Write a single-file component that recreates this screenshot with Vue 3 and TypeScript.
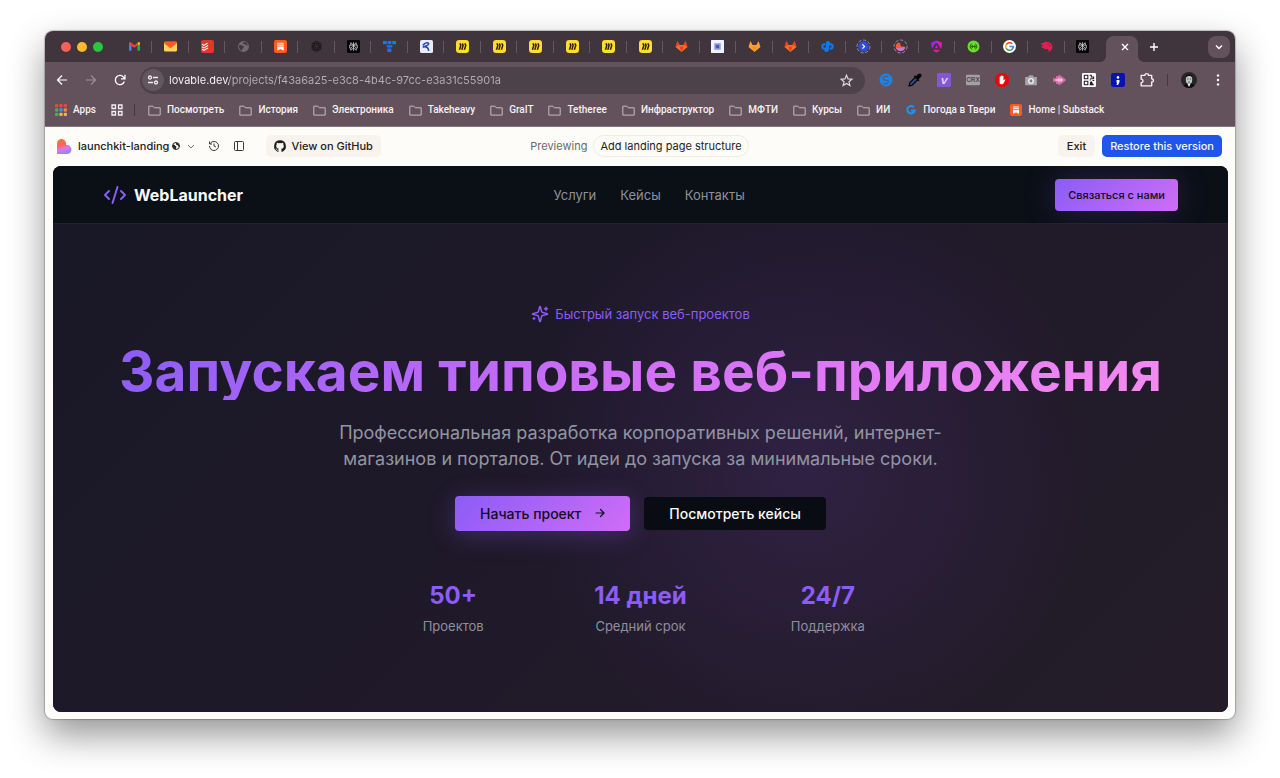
<script setup lang="ts">
import { ref } from 'vue'

const miro =
  '<rect width="24" height="24" rx="6" fill="#ffdd33"/><path d="M6 7l2.600-1.500 1.800 4-2.400 8.500H5l2.400-8zM10.400 7L13 5.500l1.600 4-2.200 8.500h-3l2.200-8zM15 7l2.600-1.500L19.500 9.500 17 18h-3l2.600-8z" fill="#2a2309"/>'
const perplexity =
  '<rect width="24" height="24" rx="2" fill="#050505"/><path d="M12 4v16M12 9.500L7 5v4.500M12 9.500L17 5v4.500M12 10l-5 5v4l5-4.500M12 10l5 5v4l-5-4.500M7 15H5V9.500h14V15h-2" fill="none" stroke="#e5e5e5" stroke-width="1.300"/>'
const fox =
  '<path d="M1 13L4.500 2l4 7h7l4-7L23 13l-11 9z" fill="#fc6d26"/><path d="M12 22L8 12h8z" fill="#e24329"/><path d="M1 13L4.500 2l4 7zM23 13L19.500 2l-4 7z" fill="#e24329"/>'
const foxYellow =
  '<path d="M1 13L4.500 2l4 7h7l4-7L23 13l-11 9z" fill="#fca326"/><path d="M12 22L8 12h8z" fill="#fc8a26"/>'
const substack =
  '<rect width="24" height="24" rx="4" fill="#ff5a1f"/><path d="M6 5h12v2H6zM6 8.500h12v2H6zM6 12h12v8l-6-3.500L6 20z" fill="#fff"/>'

const icons: Record<string, string> = {
  gmail:
    '<path d="M2 20V6l4.500 3v11z" fill="#4285f4"/><path d="M22 20V6l-4.500 3v11z" fill="#34a853"/><path d="M17.500 9.500V5l1.500-1c2-.8 3 .5 3 2v2.500z" fill="#fbbc04"/><path d="M2 8.500V6c0-1.800 1.600-2.800 3-1.800L12 9.500l5.500-4.500v5L12 14.500z" fill="#ea4335"/>',
  mail:
    '<path d="M0 5a2 2 0 012-2h20a2 2 0 012 2v14a2 2 0 01-2 2H2a2 2 0 01-2-2z" fill="#ffd35a"/><path d="M0 6c0-2 1-3 2-3h20c1 0 2 1 2 3L12 15z" fill="#ff5a1f"/>',
  todoist:
    '<rect width="24" height="24" rx="4" fill="#e0392b"/><path d="M2 8l3.500 2L12 6M2 12.500l3.500 2L13 10M2 17l3.500 2L13 14.500" fill="none" stroke="#fff" stroke-width="2"/>',
  globe:
    '<circle cx="12" cy="12" r="10" fill="#75696f"/><path d="M4 9c3-1 4 2 7 2s2 3 0 4-1 3-2 5c-4-2-6-7-5-11zM12 4c4-1 7 2 8 6-3 1-4-2-6-2s-3-2-2-4z" fill="#40353c"/>',
  substack,
  openai:
    '<g fill="none" stroke="#17110f" stroke-width="1.400"><ellipse cx="12" cy="12" rx="5" ry="9.500"/><ellipse cx="12" cy="12" rx="5" ry="9.500" transform="rotate(60 12 12)"/><ellipse cx="12" cy="12" rx="5" ry="9.500" transform="rotate(120 12 12)"/><circle cx="12" cy="12" r="2.500"/></g>',
  perplexity,
  blueT:
    '<path d="M0 2h7v6H0zM8.500 2h7v6h-7zM17 2h7v6h-7zM7 9.500h10V14H7zM8 15.500h7.500V22H8z" fill="#1677ef"/>',
  route:
    '<rect width="24" height="24" rx="3" fill="#e8edfb"/><path d="M6 9c5-5 10-5 10-2s-8 5-10 6c5-1 9 0 10 6" fill="none" stroke="#2745b8" stroke-width="2.800" stroke-linecap="round" stroke-linejoin="round"/>',
  miro,
  fox,
  foxYellow,
  doc: '<rect width="24" height="24" rx="1" fill="#f1f2ff"/><rect x="6" y="6" width="12" height="12" fill="#8f99dd"/><path d="M9 9h6v6H9z" fill="#4958bd"/>',
  blueNode:
    '<path d="M12 2c4 0 5 2 5 4h2c6 1 6 11 0 12h-3v-4h2c2 0 2-4 0-4h-3v5c0 4-2 7-5 7-3 0-4-2-4-4H5c-6-1-6-11 0-12h3v4H6c-2 0-2 4 0 4h3V8c0-4 1-6 3-6z" fill="#0f78e8"/>',
  ringArrow:
    '<circle cx="12" cy="12" r="12" fill="none" stroke="#aaa5c8" stroke-width="1.400" stroke-dasharray="6 3"/><circle cx="12" cy="12" r="9.500" fill="#2f4be0"/><path d="M10 8l4 4-4 4" fill="none" stroke="#fff" stroke-width="2.200"/>',
  ringHeart:
    '<circle cx="12" cy="12" r="12" fill="none" stroke="#aaa5c8" stroke-width="1.400" stroke-dasharray="6 3"/><path d="M3 12a9 9 0 014-7c3-1 5 1 5 4l1 3h5c3 0 3 2 2 4-3 6-17 6-17-4z" fill="#ff5630"/><path d="M4 14c4 2 12 1 16-1 0 9-14 10-16 1z" fill="#c478e8"/>',
  angular:
    '<path d="M12 1l10 4-1.500 11L14 6h-4L3.500 16 2 5z" fill="#a327e0"/><path d="M12 1l10 4-1.500 11L14 6z" fill="#e01ba0"/><path d="M7 18h10l1 2-6 3-6-3z" fill="#e01ba0"/><path d="M12 9l3 6H9z" fill="#c81fc0"/>',
  green:
    '<circle cx="12" cy="12" r="11" fill="#6ddc2d"/><path d="M9 7a5.500 5.500 0 000 10M15 7a5.500 5.500 0 010 10M8 12h8M9.500 9v6M14.500 9v6" fill="none" stroke="#1d5f10" stroke-width="1.800"/>',
  google:
    '<circle cx="12" cy="12" r="12" fill="#fff"/><g fill="none" stroke-width="3"><path d="M6 8.500A7 7 0 0117 7" stroke="#ea4335"/><path d="M6 15.500a7 7 0 010-7" stroke="#fbbc04"/><path d="M17 17a7 7 0 01-11-1.500" stroke="#34a853"/><path d="M12 12h7a7 7 0 01-2 5" stroke="#4285f4"/></g>',
  nest: '<path d="M2 5c4 2 5-2 9-2 7 0 12 4 12 10 0 4-3 8-8 9 2-3 1-5-1-6-3 2-6 1-7-1-3 0-5-2-5-4 2 1 4 0 4-1-2 0-4-2-4-5z" fill="#de2150"/><path d="M13 7c4 0 6 3 6 6" fill="none" stroke="#8d1b3c" stroke-width="1.500"/>',
  shazam:
    '<circle cx="12" cy="12" r="11" fill="#1a84ea"/><path d="M16 6c-5-2-9 1-9 4 0 4 9 1 9 5 0 3-4 5-9 3" fill="none" stroke="#5a5a72" stroke-width="2.200"/>',
  dropper:
    '<path d="M2 22l1-5L13 7l4 4L7 21z" fill="#2a4e92" stroke="#050505" stroke-width="2.200"/><path d="M11 5l8 8M15 7l3-4c3-2 5 1 3 3l-4 4z" stroke="#050505" stroke-width="3" fill="#050505"/>',
  letterV:
    '<rect width="24" height="24" rx="2" fill="#8457d5"/><text x="12" y="18" text-anchor="middle" font-family="Liberation Sans, sans-serif" font-size="17" font-weight="700" font-style="italic" fill="#e9defc">V</text>',
  crx: '<rect x="0" y="3" width="24" height="18" rx="2" fill="#a5a0a2"/><text x="12" y="16" text-anchor="middle" font-family="Liberation Sans, sans-serif" font-size="11" font-weight="700" fill="#514a4e">CRX</text>',
  block:
    '<path d="M7 0h10l7 7v10l-7 7H7l-7-7V7z" fill="#e00d0d"/><path d="M8 12V7c0-1 1.500-1 1.500 0V5.500c0-1 1.500-1 1.500 0V5c0-1 2-1 2 0v1c0-1 1.500-1 1.500 0v7l2-2c1-.6 1.500.4 1 1l-3 6c-1 2-6 2-6.500-1z" fill="#fff"/>',
  camera:
    '<path d="M2 7h5l2-3h6l2 3h5v14H2z" fill="#a8a5a6"/><circle cx="12" cy="13.500" r="5" fill="#f2f2f2"/><circle cx="12" cy="13.500" r="2.600" fill="#70808a"/>',
  record:
    '<path d="M0 9h5V5h5V2l13 10-13 10v-3H5v-4H0z" fill="#d66aa8"/><path d="M4 12h13M10 8v8M14 9v6" stroke="#ffc3e4" stroke-width="2.400"/>',
  qr: '<rect width="24" height="24" rx="2" fill="#fff"/><g fill="none" stroke="#231d20" stroke-width="1.800"><path d="M4 4h6v6H4zM4 14h6v6H4z"/><path d="M13 4h3v3h4v3h-6M13 12h2M18 13h3"/></g><path d="M14 15l3-1 1 3 3 4h-8z" fill="#231d20"/>',
  semi: '<rect width="24" height="24" rx="4" fill="#0712b0"/><circle cx="12" cy="7.500" r="2.200" fill="#fff"/><path d="M9.500 12h5v4l-2.500 4.500H9.500l1-4h-1z" fill="#fff"/>',
  puzzle:
    '<path d="M2 4h6.500c-.5-4 6.500-4 6 0H20v6c4-.5 4 6 0 5.500V22H2v-5.500c4 .3 4-6.300 0-6z" fill="none" stroke="#f4eef1" stroke-width="2.400" stroke-linejoin="round"/>',
  folder:
    '<path d="M1.500 4h7.500l2.500 3H22.500v13.500h-21z" fill="none" stroke="#c9bcc4" stroke-width="1.800" stroke-linejoin="round"/>',
  weather:
    '<path d="M18 6.500a7.500 7.500 0 10 1.500 6.500H12" fill="none" stroke="#2592e8" stroke-width="4"/>',
}

const tabs = [
  ['gmail', 'Gmail'], ['mail', 'Mail'], ['todoist', 'Todoist'], ['globe', 'Site'], ['substack', 'Substack'],
  ['openai', 'ChatGPT'], ['perplexity', 'Perplexity'], ['blueT', 'Tracker'], ['route', 'Route'],
  ['miro', 'Miro'], ['miro', 'Miro'], ['miro', 'Miro'], ['miro', 'Miro'], ['miro', 'Miro'], ['miro', 'Miro'],
  ['fox', 'GitLab'], ['doc', 'Document'], ['foxYellow', 'GitLab'], ['fox', 'GitLab'], ['blueNode', 'Nodes'],
  ['ringArrow', 'Console'], ['ringHeart', 'Lovable'], ['angular', 'Angular'], ['green', 'Swagger'],
  ['google', 'Google'], ['nest', 'NestJS'], ['perplexity', 'Perplexity'],
]
const extensions = [
  ['shazam', 'Shazam'], ['dropper', 'Color picker'], ['letterV', 'Video'], ['crx', 'CRX'], ['block', 'Blocker'],
  ['camera', 'Screenshot'], ['record', 'Recorder'], ['qr', 'QR code'], ['semi', 'Snippets'], ['puzzle', 'Extensions'],
]
const bookmarks = [
  ['folder', 'Посмотреть'], ['folder', 'История'], ['folder', 'Электроника'], ['folder', 'Takeheavy'],
  ['folder', 'GraIT'], ['folder', 'Tetheree'], ['folder', 'Инфраструктор'], ['folder', 'МФТИ'],
  ['folder', 'Курсы'], ['folder', 'ИИ'], ['weather', 'Погода в Твери'], ['substack', 'Home | Substack'],
]
const appColors = ['#e5493a', '#e5493a', '#e5493a', '#45b05a', '#4b8bf0', '#e98a3a', '#45b05a', '#f0b83a', '#f0b83a']
const stats = [
  { value: '50+', label: 'Проектов' },
  { value: '14 дней', label: 'Средний срок' },
  { value: '24/7', label: 'Поддержка' },
]
const url = ref('lovable.dev/projects/f43a6a25-e3c8-4b4c-97cc-e3a31c55901a')
</script>

<template>
  <div class="desktop">
    <div class="window">
      <div class="tabstrip">
        <div class="lights"><i class="red"></i><i class="yellow"></i><i class="green"></i></div>
        <div class="tabs">
          <button v-for="(t, i) in tabs" :key="i" class="tab" :aria-label="t[1]">
            <svg viewBox="0 0 24 24" v-html="icons[t[0]]"></svg>
          </button>
        </div>
        <div class="tab-active">
          <button class="bare" aria-label="Close tab">
            <svg width="8" height="8" viewBox="0 0 8 8"><path d="M1 1l6 6M7 1L1 7" stroke="#fff" stroke-width="1.400" /></svg>
          </button>
        </div>
        <button class="bare newtab" aria-label="New tab">
          <svg width="10" height="10" viewBox="0 0 10 10"><path d="M5 1v8M1 5h8" stroke="#fff" stroke-width="1.400" /></svg>
        </button>
        <button class="tabsearch" aria-label="Search tabs">
          <svg width="8" height="6" viewBox="0 0 8 6"><path d="M1 1.500l3 3 3-3" fill="none" stroke="#fff" stroke-width="1.400" /></svg>
        </button>
      </div>

      <div class="toolbar">
        <div class="nav-buttons">
          <button class="bare" aria-label="Back">
            <svg width="12" height="12" viewBox="0 0 12 12" fill="none" stroke="#fff" stroke-width="1.200"><path d="M11 6H1.500M6 1.500L1.500 6 6 10.500" /></svg>
          </button>
          <button class="bare" aria-label="Forward">
            <svg width="12" height="12" viewBox="0 0 12 12" fill="none" stroke="#9c8e96" stroke-width="1.200"><path d="M1 6h9.500M6 1.500L10.500 6 6 10.500" /></svg>
          </button>
          <button class="bare" aria-label="Reload">
            <svg width="12" height="12" viewBox="0 0 12 12" fill="none" stroke="#fff" stroke-width="1.300"><path d="M10.300 7.500A4.600 4.600 0 1 1 9.800 3.500L11 4.800M11 .8v4H7" /></svg>
          </button>
        </div>
        <div class="address">
          <button class="siteinfo" aria-label="Site information">
            <svg width="12" height="12" viewBox="0 0 12 12" fill="none" stroke="#f2ebef" stroke-width="1.300"><circle cx="3" cy="3.500" r="1.500" /><path d="M6 3.500h5M1 8.500h5" /><circle cx="9" cy="8.500" r="1.500" /></svg>
          </button>
          <input v-model="url" class="url" type="text" aria-label="Address" />
          <button class="bare" aria-label="Bookmark this page">
            <svg width="13" height="13" viewBox="0 0 24 24" fill="none" stroke="#e2d9de" stroke-width="2.200"><path d="M12 2.500l2.900 6.600 7.100.6-5.400 4.700 1.700 7L12 17.600l-6.300 3.800 1.700-7L2 9.700l7.100-.6z" /></svg>
          </button>
        </div>
        <div class="extensions">
          <button v-for="e in extensions" :key="e[0]" class="bare" :aria-label="e[1]">
            <svg width="14" height="14" viewBox="0 0 24 24" v-html="icons[e[0]]"></svg>
          </button>
        </div>
        <span class="vline"></span>
        <button class="bare" aria-label="Profile">
          <svg width="16" height="16" viewBox="0 0 16 16"><circle cx="8" cy="8" r="8" fill="#262626" /><path d="M3 14c1-3 3-3 5-3s4 0 5 3a8 8 0 01-10 0z" fill="#0c0c0c" /><ellipse cx="8" cy="7.500" rx="3.200" ry="4.600" fill="#c6c6c6" /><path d="M4.800 5.500C4.500 1 11.500 1 11.200 5.500 10 3.500 7 3.500 4.800 5.500z" fill="#0e0e0e" /><path d="M6 7h1.500M8.700 7h1.500M7 10h2" stroke="#444" stroke-width=".8" /><path d="M6.500 12l1.500 3 1.500-3z" fill="#eee" /></svg>
        </button>
        <button class="bare dots" aria-label="Menu">
          <svg width="4" height="14" viewBox="0 0 4 14" fill="#fff"><circle cx="2" cy="2.500" r="1.200" /><circle cx="2" cy="7" r="1.200" /><circle cx="2" cy="11.500" r="1.200" /></svg>
        </button>
      </div>

      <nav class="bookmarks" aria-label="Bookmarks">
        <a href="#" class="bookmark apps">
          <svg width="11" height="11" viewBox="0 0 11 11"><rect v-for="(c, i) in appColors" :key="i" :x="(i % 3) * 4" :y="Math.floor(i / 3) * 4" width="3" height="3" rx="1" :fill="c" /></svg>
          Apps
        </a>
        <button class="bare" aria-label="Tab groups">
          <svg width="12" height="12" viewBox="0 0 12 12" fill="none" stroke="#f4eef1" stroke-width="1.300"><path d="M1 1h3.500v3.500H1zM7.500 1H11v3.500H7.500zM1 7.500h3.500V11H1zM7.500 7.500H11V11H7.500z" /></svg>
        </button>
        <span class="vline"></span>
        <a v-for="b in bookmarks" :key="b[1]" href="#" class="bookmark" :class="b[0]">
          <svg viewBox="0 0 24 24" v-html="icons[b[0]]"></svg>{{ b[1] }}
        </a>
      </nav>

      <div class="appbar">
        <div class="project">
          <button class="bare projname">
            <svg width="14" height="15" viewBox="0 0 14 15"><defs><linearGradient id="heart" x1="0" y1="0" x2=".3" y2="1"><stop offset="0" stop-color="#ff7a1a" /><stop offset=".45" stop-color="#fb6468" /><stop offset=".75" stop-color="#d67ae8" /><stop offset="1" stop-color="#8f86ff" /></linearGradient></defs><path d="M0 4.500a4.500 4.500 0 019 0V6h1a4.500 4.500 0 010 9H0z" fill="url(#heart)" /></svg>
            <span>launchkit-landing</span>
            <svg width="8" height="8" viewBox="0 0 8 8"><circle cx="4" cy="4" r="3.500" fill="#fff" stroke="#222" /><path d="M1 2.500c2 0 2 1.500 3 1.800S4 6 3.500 7.500C1.500 7 .5 5 1 2.500zM4.500.7C6.500 1 7.500 3 7.300 5 6 4.500 6 3 5 3s-1.500-1-.5-2.300z" fill="#222" /></svg>
            <svg width="8" height="5" viewBox="0 0 8 5"><path d="M1 1l3 3 3-3" fill="none" stroke="#777" /></svg>
          </button>
          <button class="bare" aria-label="History">
            <svg width="12" height="12" viewBox="0 0 24 24" fill="none" stroke="#3a3a38" stroke-width="2"><path d="M3 12a9 9 0 1 0 9-9 9.750 9.750 0 0 0-6.740 2.740L3 8M3 3v5h5M12 7v5l4 2" /></svg>
          </button>
          <button class="bare panel" aria-label="Toggle panel">
            <svg width="10" height="10" viewBox="0 0 10 10" fill="none" stroke="#3a3a38"><rect x=".5" y=".5" width="9" height="9" rx="1" /><path d="M3.500.5v9" /></svg>
          </button>
          <button class="chip github">
            <svg width="12" height="12" viewBox="0 0 24 24" fill="#1b1b1b"><path d="M12 .5a12 12 0 00-3.800 23.300c.6.1.8-.2.8-.6v-2.200c-3.300.7-4-1.400-4-1.400-.6-1.400-1.400-1.800-1.400-1.800-1-.7.100-.7.100-.7 1.200.1 1.900 1.200 1.900 1.200 1 1.800 2.800 1.300 3.500 1 .1-.8.400-1.300.700-1.600-2.600-.3-5.400-1.300-5.400-6 0-1.200.5-2.300 1.300-3.100-.2-.4-.6-1.600 0-3.200 0 0 1-.3 3.400 1.200a11.500 11.500 0 016 0C17.300 5.100 18.300 5.400 18.300 5.400c.7 1.700.2 2.900.1 3.200.8.800 1.200 1.900 1.200 3.200 0 4.600-2.800 5.600-5.400 5.900.4.400.8 1.100.8 2.200v3.300c0 .3.200.7.800.6A12 12 0 0012 .5z" /></svg>
            View on GitHub
          </button>
        </div>
        <div class="previewing">Previewing <span class="pill">Add landing page structure</span></div>
        <div class="actions">
          <button class="chip">Exit</button>
          <button class="restore">Restore this version</button>
        </div>
      </div>

      <main class="site">
        <header class="site-head">
          <a href="#" class="brand">
            <svg width="24" height="24" viewBox="0 0 24 24" fill="none" stroke="#8b5cf6" stroke-width="2" stroke-linecap="round" stroke-linejoin="round"><path d="M18 16l4-4-4-4M6 8l-4 4 4 4M14.500 4l-5 16" /></svg>
            WebLauncher
          </a>
          <nav class="site-nav">
            <a href="#">Услуги</a><a href="#">Кейсы</a><a href="#">Контакты</a>
          </nav>
          <button class="contact">Связаться с нами</button>
        </header>
        <section class="hero">
          <div class="badge">
            <svg width="18" height="18" viewBox="0 0 24 24" fill="none" stroke="#8b5cf6" stroke-width="2" stroke-linecap="round" stroke-linejoin="round"><path d="M9.937 15.500A2 2 0 0 0 8.500 14.063l-6.135-1.582a.5.5 0 0 1 0-.962L8.500 9.936A2 2 0 0 0 9.937 8.500l1.582-6.135a.5.5 0 0 1 .963 0L14.063 8.500A2 2 0 0 0 15.500 9.937l6.135 1.581a.5.5 0 0 1 0 .964L15.500 14.063a2 2 0 0 0-1.437 1.437l-1.582 6.135a.5.5 0 0 1-.963 0zM20 3v4M22 5h-4M4 17v2M5 18H3" /></svg>
            Быстрый запуск веб-проектов
          </div>
          <h1>Запускаем типовые веб-приложения</h1>
          <p>Профессиональная разработка корпоративных решений, интернет-магазинов и порталов. От идеи до запуска за минимальные сроки.</p>
          <div class="cta">
            <button class="primary">
              Начать проект
              <svg width="10" height="10" viewBox="0 0 10 10" fill="none" stroke="currentColor" stroke-width="1.200" stroke-linecap="round" stroke-linejoin="round"><path d="M1 5h8M5.500 1.500L9 5 5.500 8.500" /></svg>
            </button>
            <button class="secondary">Посмотреть кейсы</button>
          </div>
          <dl class="stats">
            <div v-for="s in stats" :key="s.label">
              <dd>{{ s.value }}</dd>
              <dt>{{ s.label }}</dt>
            </div>
          </dl>
        </section>
      </main>
    </div>
  </div>
</template>

<style>
body {
  margin: 0;
  background: #fff;
}
</style>

<style scoped>
* {
  box-sizing: border-box;
}
.desktop {
  display: flex;
  min-height: 100vh;
  padding: 31px 45px 59px;
  font-family: Inter, "Noto Sans", sans-serif;
  overflow: hidden;
}
button {
  font: inherit;
  color: inherit;
  border: 0;
  padding: 0;
  cursor: pointer;
}
a {
  color: inherit;
  text-decoration: none;
}
svg {
  display: block;
  flex: none;
  overflow: visible;
}
.bare {
  background: none;
}
.window {
  flex: 1;
  min-width: 0;
  display: flex;
  flex-direction: column;
  border-radius: 8px;
  background: #fdfcf8;
  box-shadow: 0 0 1px 1px rgba(0, 0, 0, 0.22), 0 16px 36px rgba(0, 0, 0, 0.42);
}
.tabstrip {
  display: flex;
  align-items: center;
  height: 31px;
  background: #40353c;
  border-radius: 8px 8px 0 0;
  padding-right: 5px;
}
.lights {
  display: flex;
  gap: 6px;
  padding-left: 16px;
  width: 71px;
  flex: none;
}
.lights i {
  width: 10px;
  height: 10px;
  border-radius: 50%;
}
.red {
  background: #f96057;
}
.yellow {
  background: #fcbb2f;
}
.green {
  background: #29c53f;
}
.tabs {
  flex: 1;
  display: flex;
  min-width: 0;
}
.tab {
  flex: 1;
  display: flex;
  justify-content: center;
  align-items: center;
  height: 14px;
  min-width: 0;
  background: linear-gradient(#65585f, #65585f) right center / 1px 12px no-repeat;
}
.tab:last-child {
  background: none;
}
.tab svg {
  width: 13px;
  height: 13px;
}
.tab-active {
  position: relative;
  align-self: flex-end;
  display: flex;
  align-items: center;
  justify-content: flex-end;
  width: 32px;
  height: 26px;
  margin-left: 5px;
  padding: 0 9px 4px 0;
  background: #63525c;
  border-radius: 8px 8px 0 0;
}
.tab-active::before,
.tab-active::after {
  content: "";
  position: absolute;
  bottom: 0;
  width: 6px;
  height: 6px;
}
.tab-active::before {
  right: 100%;
  background: radial-gradient(circle at 0 0, transparent 6px, #63525c 6px);
}
.tab-active::after {
  left: 100%;
  background: radial-gradient(circle at 100% 0, transparent 6px, #63525c 6px);
}
.newtab {
  width: 32px;
  display: flex;
  justify-content: center;
}
.tabsearch {
  display: flex;
  align-items: center;
  justify-content: center;
  width: 22px;
  height: 22px;
  margin-left: 38px;
  border-radius: 8px;
  background: #63525c;
}
.toolbar {
  display: flex;
  align-items: center;
  height: 36px;
  padding: 0 15px 0 11px;
  background: #63525c;
}
.nav-buttons {
  display: flex;
  gap: 17px;
  margin-right: 14px;
}
.address {
  flex: 1;
  display: flex;
  align-items: center;
  min-width: 0;
  height: 27px;
  padding: 0 12px 0 2px;
  border-radius: 14px;
  background: #4d424a;
}
.siteinfo {
  display: flex;
  align-items: center;
  justify-content: center;
  width: 22px;
  height: 22px;
  border-radius: 50%;
  background: #63565e;
}
.url {
  flex: 1;
  min-width: 0;
  margin-left: 5px;
  padding: 0;
  border: 0;
  outline: 0;
  font: 400 11px/16px Inter, sans-serif;
  color: transparent;
  background: linear-gradient(90deg, #fff 60px, #b8adb3 60px);
  background-clip: text;
}
.extensions {
  display: flex;
  gap: 15px;
  margin-left: 14px;
}
.vline {
  width: 1px;
  height: 12px;
  background: #44383f;
}
.toolbar .vline {
  margin: 0 13px;
}
.dots {
  margin-left: 19px;
}
.bookmarks {
  display: flex;
  align-items: center;
  gap: 15px;
  height: 29px;
  padding: 0 10px 4px;
  background: #63525c;
  border-bottom: 1px solid #857880;
  color: #f6f1f4;
  font-family: Roboto, "Noto Sans", sans-serif;
  font-size: 10px;
  line-height: 14px;
  font-weight: 500;
  white-space: nowrap;
  overflow: hidden;
}
.bookmark {
  display: flex;
  align-items: center;
  gap: 6px;
}
.bookmark svg {
  width: 12px;
  height: 12px;
}
.bookmark.folder svg {
  width: 13px;
  height: 13px;
}
.bookmarks .vline {
  margin: 0 -2px 0 -4px;
}
.appbar {
  display: grid;
  grid-template-columns: 1fr auto 1fr;
  align-items: center;
  height: 39px;
  padding: 0 13px 1px 12px;
  color: #222220;
  font-size: 11px;
  line-height: 16px;
  font-weight: 500;
  white-space: nowrap;
}
.project,
.projname,
.previewing,
.actions,
.chip {
  display: flex;
  align-items: center;
}
.projname {
  gap: 7px;
  margin-right: 13px;
}
.projname span {
  margin-right: -4px;
}
.panel {
  margin: 0 22px 0 14px;
}
.chip {
  gap: 5px;
  height: 22px;
  padding: 0 9px;
  border-radius: 5px;
  background: #f8f4ed;
}
.github {
  padding: 0 8px;
}
.previewing {
  gap: 6px;
  color: #6b6a66;
  font-weight: 400;
}
.pill {
  padding: 2px 6px;
  border: 1px solid #efece5;
  border-radius: 11px;
  color: #222220;
}
.actions {
  justify-content: flex-end;
  gap: 7px;
}
.restore {
  height: 22px;
  padding: 0 8px;
  border-radius: 5px;
  background: #1f55ea;
  color: #f3f6ff;
}
.site {
  flex: 1;
  display: flex;
  flex-direction: column;
  margin: 0 7px 7px 8px;
  border-radius: 8px;
  overflow: hidden;
  background: #1c1828;
}
.site-head {
  display: flex;
  align-items: center;
  justify-content: space-between;
  height: 58px;
  padding: 0 50px;
  background: #0b0f16;
  border-bottom: 1px solid #1f2230;
}
.brand {
  display: flex;
  align-items: center;
  gap: 7px;
  color: #fafafa;
  font-size: 16px;
  font-weight: 700;
}
.site-nav {
  display: flex;
  gap: 24px;
  color: #8f929c;
  font-size: 13px;
}
.contact {
  height: 32px;
  padding: 0 13px;
  border-radius: 4px;
  background: linear-gradient(135deg, #8b5cf6, #cf6df7);
  box-shadow: 0 0 34px rgba(139, 92, 246, 0.24);
  color: #130c22;
  font-size: 11px;
  font-weight: 500;
}
.hero {
  flex: 1;
  display: flex;
  flex-direction: column;
  align-items: center;
  justify-content: center;
  padding: 43px 24px 40px;
  background:
    radial-gradient(circle at 64% 50%, rgba(110, 64, 175, 0.2), rgba(110, 64, 175, 0) 290px),
    linear-gradient(135deg, #191827, #1f1929 50%, #241d29);
  text-align: center;
}
.badge {
  display: flex;
  align-items: center;
  gap: 6px;
  color: #8b5cf6;
  font-size: 13px;
  line-height: 18px;
  font-weight: 400;
}
h1 {
  margin: 20px 0;
  font-size: 55px;
  line-height: 57px;
  font-weight: 700;
  color: transparent;
  background: linear-gradient(135deg, #8b5cf6, #d26ff7 50%, #f58af0);
  background-clip: text;
}
p {
  max-width: 620px;
  margin: 0;
  color: #9295a1;
  font-size: 18px;
  line-height: 26px;
}
.cta {
  display: flex;
  align-items: center;
  gap: 14px;
  margin-top: 24px;
  font-size: 14px;
  font-weight: 500;
}
.primary {
  display: flex;
  align-items: center;
  gap: 14px;
  height: 35px;
  padding: 0 25px;
  border-radius: 4px;
  background: linear-gradient(135deg, #8b5cf6, #cf6df7);
  box-shadow: 0 4px 26px rgba(139, 92, 246, 0.3);
  color: #130c22;
}
.secondary {
  height: 33px;
  padding: 0 25px;
  border-radius: 4px;
  background: #090c13;
  color: #fafafa;
}
.stats {
  display: grid;
  grid-template-columns: repeat(3, 1fr);
  gap: 26px;
  width: 100%;
  max-width: 536px;
  margin: 50px 0 0;
}
.stats > div {
  display: flex;
  flex-direction: column;
  gap: 6px;
}
dd {
  margin: 0;
  color: #8b5cf6;
  font-size: 24px;
  line-height: 30px;
  font-weight: 700;
}
dt {
  color: #8f8f9d;
  font-size: 13px;
  line-height: 18px;
}
</style>
